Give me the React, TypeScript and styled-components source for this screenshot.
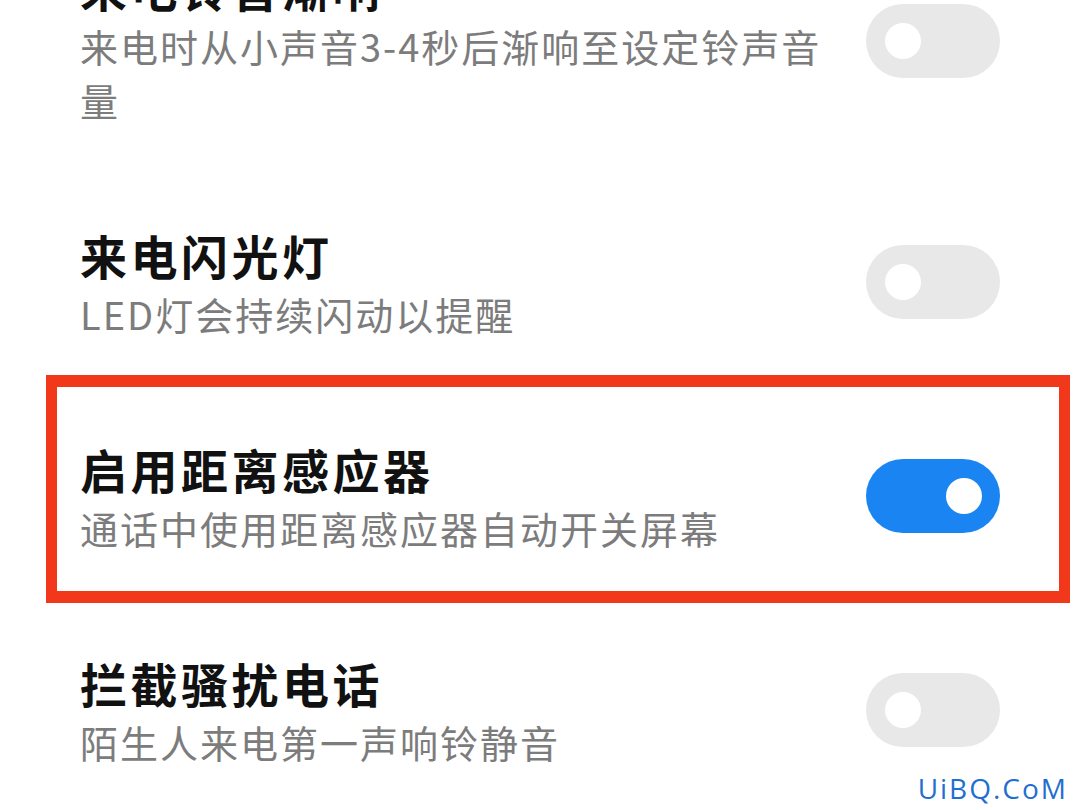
import React from "react";
import styled, { createGlobalStyle } from "styled-components";

const Global = createGlobalStyle`
  html, body { margin: 0; padding: 0; background: #ffffff; }
  body {
    width: 1080px;
    height: 810px;
    overflow: hidden;
    font-family: "Noto Sans CJK SC", "Noto Sans", sans-serif;
  }
`;

const Page = styled.div`
  position: relative;
  width: 1080px;
  height: 810px;
  overflow: hidden;
  background: #ffffff;
`;

const List = styled.div`
  display: flex;
  flex-direction: column;
  margin-top: -93px;
`;

const Row = styled.div<{ $highlight?: boolean }>`
  position: relative;
  display: flex;
  align-items: center;
  gap: 20px;
  padding: 48px 80px 48px 80px;
  ${(p) =>
    p.$highlight &&
    `
    &::after {
      content: "";
      position: absolute;
      top: -14px;
      left: 46px;
      right: 10px;
      bottom: 0;
      border-style: solid;
      border-color: #f2381b;
      border-width: 12px 11px;
      pointer-events: none;
    }
  `}
`;

const TextCol = styled.div`
  flex: 1;
  min-width: 0;
  display: flex;
  flex-direction: column;
`;

const Title = styled.div`
  font-size: 47px;
  line-height: 64px;
  font-weight: 700;
  letter-spacing: 3.5px;
  color: #111111;
  white-space: nowrap;
`;

const Subtitle = styled.div`
  font-size: 38px;
  line-height: 54px;
  font-weight: 400;
  letter-spacing: 2px;
  color: #7c7c7c;
`;

const Track = styled.div<{ $on?: boolean }>`
  flex: none;
  width: 134px;
  height: 74px;
  border-radius: 37px;
  background: ${(p) => (p.$on ? "#1a84f2" : "#e8e8e8")};
  display: flex;
  align-items: center;
  justify-content: ${(p) => (p.$on ? "flex-end" : "flex-start")};
  padding: 0 18px 0 19px;
  box-sizing: border-box;
`;

const Knob = styled.div`
  width: 36px;
  height: 36px;
  border-radius: 50%;
  background: #ffffff;
`;

const Watermark = styled.div`
  position: absolute;
  right: 12px;
  bottom: 6px;
  font-family: "Open Sans", "DejaVu Sans", sans-serif;
  font-size: 28px;
  letter-spacing: 2px;
  color: #1f6fd1;
  line-height: 32px;
`;

type Item = { title: string; desc: string; on?: boolean; highlight?: boolean };

const items: Item[] = [
  { title: "来电铃音渐响", desc: "来电时从小声音3-4秒后渐响至设定铃声音量" },
  { title: "来电闪光灯", desc: "LED灯会持续闪动以提醒" },
  { title: "启用距离感应器", desc: "通话中使用距离感应器自动开关屏幕", on: true, highlight: true },
  { title: "拦截骚扰电话", desc: "陌生人来电第一声响铃静音" },
];

export default function App() {
  return (
    <Page>
      <Global />
      <List>
        {items.map((it) => (
          <Row key={it.title} $highlight={it.highlight}>
            <TextCol>
              <Title>{it.title}</Title>
              <Subtitle>{it.desc}</Subtitle>
            </TextCol>
            <Track $on={it.on}>
              <Knob />
            </Track>
          </Row>
        ))}
      </List>
      <Watermark>UiBQ.CoM</Watermark>
    </Page>
  );
}
